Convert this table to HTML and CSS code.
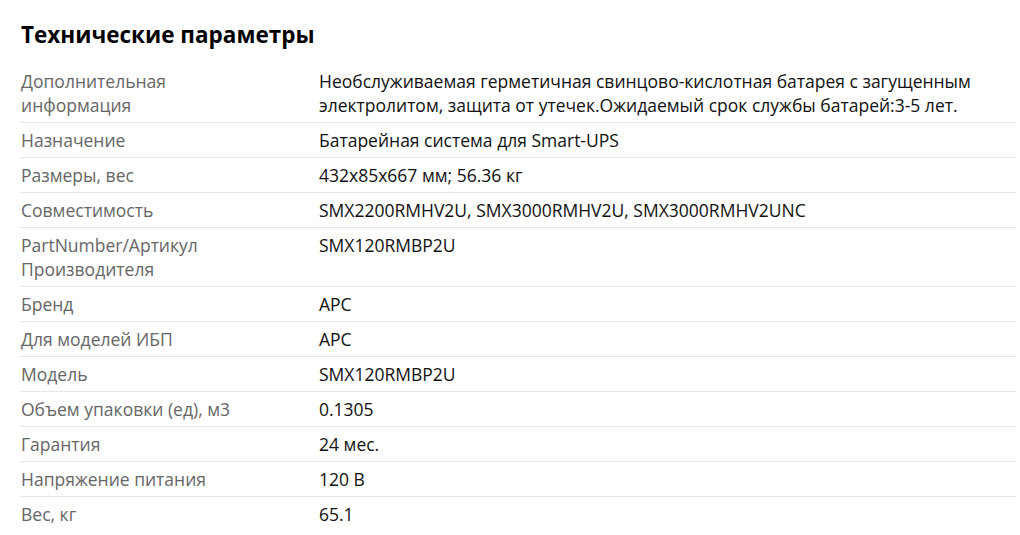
FILE: index.html
```html
<!DOCTYPE html>
<html lang="ru">
<head>
<meta charset="utf-8">
<title>Технические параметры</title>
<link rel="stylesheet" href="styles.css">
</head>
<body>
<section class="specs">
  <h2 class="specs-title">Технические параметры</h2>
  <div class="specs-table">
    <div class="row"><div class="label">Дополнительная информация</div><div class="value">Необслуживаемая герметичная свинцово-кислотная батарея с загущенным электролитом, защита от утечек.Ожидаемый срок службы батарей:3-5 лет.</div></div>
    <div class="row"><div class="label">Назначение</div><div class="value">Батарейная система для Smart-UPS</div></div>
    <div class="row"><div class="label">Размеры, вес</div><div class="value">432x85x667 мм; 56.36 кг</div></div>
    <div class="row"><div class="label">Совместимость</div><div class="value">SMX2200RMHV2U, SMX3000RMHV2U, SMX3000RMHV2UNC</div></div>
    <div class="row"><div class="label">PartNumber/Артикул Производителя</div><div class="value">SMX120RMBP2U</div></div>
    <div class="row"><div class="label">Бренд</div><div class="value">APC</div></div>
    <div class="row"><div class="label">Для моделей ИБП</div><div class="value">APC</div></div>
    <div class="row"><div class="label">Модель</div><div class="value">SMX120RMBP2U</div></div>
    <div class="row"><div class="label">Объем упаковки (ед), м3</div><div class="value">0.1305</div></div>
    <div class="row"><div class="label">Гарантия</div><div class="value">24 мес.</div></div>
    <div class="row"><div class="label">Напряжение питания</div><div class="value">120 В</div></div>
    <div class="row last"><div class="label">Вес, кг</div><div class="value">65.1</div></div>
  </div>
</section>
</body>
</html>
```
FILE: styles.css
```css
html, body {
  margin: 0;
  padding: 0;
  background: #fff;
}
body {
  font-family: "Open Sans", "Noto Sans", sans-serif;
  color: #111;
}
.specs {
  padding: 18px 4px 0 21px;
}
.specs-title {
  margin: 0 0 12px 0;
  font-size: 22.5px;
  line-height: 34px;
  font-weight: 700;
  color: #000;
}
.specs-table {
  display: flex;
  flex-direction: column;
}
.row {
  display: grid;
  grid-template-columns: 298px 1fr;
  padding: 5px 0 5px 0;
  border-bottom: 1px solid #e6e6e6;
  font-size: 17.5px;
  line-height: 24px;
}
.row.last {
  border-bottom: none;
}
.label {
  color: #666;
  padding-right: 50px;
}
.value {
  color: #111;
}
```
